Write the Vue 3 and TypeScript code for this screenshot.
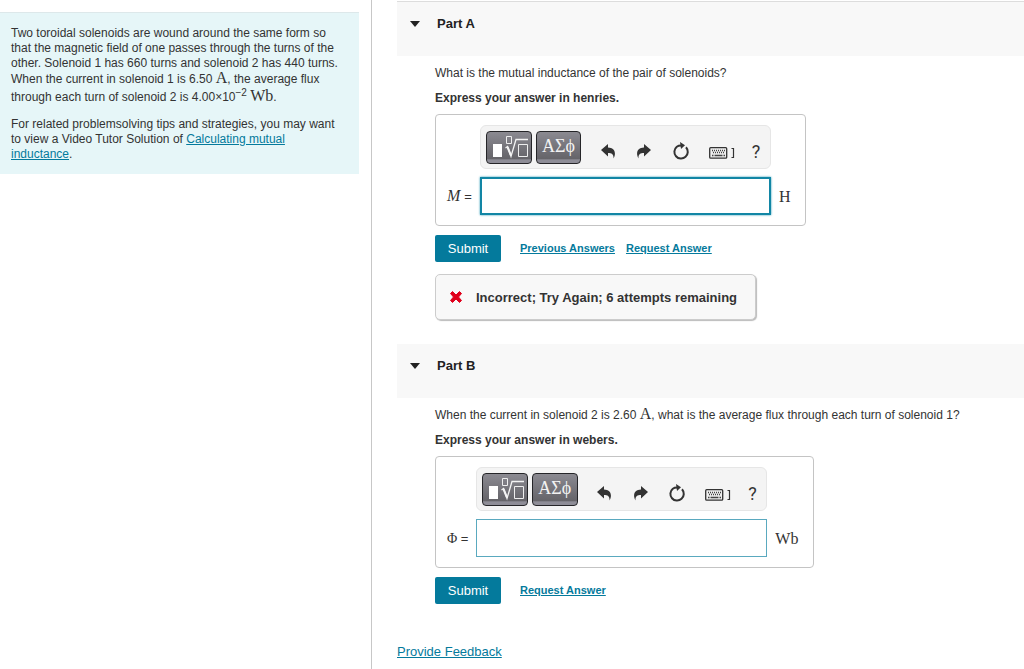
<script setup lang="ts">
import { ref } from 'vue'

interface Part {
  id: string
  title: string
  question: string
  amount?: string
  questionEnd?: string
  instruction: string
  symbol: string
  italic: boolean
  unit: string
  active: boolean
  links: string[]
  feedback?: string
}

const parts: Part[] = [
  {
    id: 'a',
    title: 'Part A',
    question: 'What is the mutual inductance of the pair of solenoids?',
    instruction: 'Express your answer in henries.',
    symbol: 'M',
    italic: true,
    unit: 'H',
    active: true,
    links: ['Previous Answers', 'Request Answer'],
    feedback: 'Incorrect; Try Again; 6 attempts remaining',
  },
  {
    id: 'b',
    title: 'Part B',
    question: 'When the current in solenoid 2 is 2.60',
    amount: 'A',
    questionEnd: ', what is the average flux through each turn of solenoid 1?',
    instruction: 'Express your answer in webers.',
    symbol: 'Φ',
    italic: false,
    unit: 'Wb',
    active: false,
    links: ['Request Answer'],
  },
]

const answers = ref<Record<string, string>>({ a: '', b: '' })
const open = ref<Record<string, boolean>>({ a: true, b: true })
</script>

<template>
  <div class="page">
    <aside class="side">
      <div class="problem">
        <p>
          Two toroidal solenoids are wound around the same form so that the magnetic field of one
          passes through the turns of the other. Solenoid 1 has 660 turns and solenoid 2 has 440
          turns. When the current in solenoid 1 is 6.50 <span class="math">A</span>, the average flux
          through each turn of solenoid 2 is 4.00×10<sup>−2</sup> <span class="math">Wb</span>.
        </p>
        <p>
          For related problemsolving tips and strategies, you may want to view a Video Tutor
          Solution of <a href="#">Calculating mutual inductance</a>.
        </p>
      </div>
    </aside>

    <main class="main">
      <section v-for="part in parts" :key="part.id" class="part">
        <h2 class="head">
          <button type="button" class="toggle" :aria-expanded="open[part.id]" @click="open[part.id] = !open[part.id]">
            <svg width="10" height="6" viewBox="0 0 10 6" aria-hidden="true"><path d="M0 0h10L5 6z" fill="#222" /></svg>
            <span>{{ part.title }}</span>
          </button>
        </h2>
        <div v-if="open[part.id]" class="body">
          <p class="question">{{ part.question }}<template v-if="part.amount">&nbsp;<span class="math">{{ part.amount }}</span>{{ part.questionEnd }}</template></p>
          <p class="instruction">{{ part.instruction }}</p>

          <div class="answer">
            <div class="toolbar" role="toolbar">
              <button type="button" class="dark" aria-label="Templates">
                <svg width="38" height="26" viewBox="0 0 38 26" aria-hidden="true">
                  <path d="M3 10h9v13H3z" fill="#fff" />
                  <path d="M16.500 2.500h5v7h-5zM28.500 10.500h9v12h-9z" fill="none" stroke="#eee" />
                  <path d="M15.500 14l2-1.500L21 22.500 26 5.500h12" fill="none" stroke="#f4f4f4" stroke-width="1.300" />
                  <path d="M17.500 13l3.500 8.500" stroke="#f4f4f4" stroke-width="2" />
                </svg>
              </button>
              <button type="button" class="dark greek">ΑΣϕ</button>
              <button type="button" class="tool first" aria-label="Undo">
                <svg width="14" height="16" viewBox="0 0 14 16" aria-hidden="true"><path d="M0 7L7 1v3.500c5 .2 7.500 3 6.800 7.500-.2 1.300-.6 2.500-1.300 3.500C12.800 11.500 11 10 7 10v3.500z" fill="#333" /></svg>
              </button>
              <button type="button" class="tool" aria-label="Redo">
                <svg width="14" height="16" viewBox="0 0 14 16" aria-hidden="true"><path d="M14 7L7 1v3.500C2 4.700-.5 7.500.2 12c.2 1.300.6 2.500 1.300 3.500C1.200 11.500 3 10 7 10v3.500z" fill="#333" /></svg>
              </button>
              <button type="button" class="tool" aria-label="Reset">
                <svg width="16" height="18" viewBox="0 0 16 18" aria-hidden="true">
                  <path d="M13 5.300A6.700 6.700 0 1 1 3.800 4.700Q5.500 3.500 8 3.500" fill="none" stroke="#333" stroke-width="2" />
                  <path d="M7 0l5 3.300L8 7z" fill="#333" />
                </svg>
              </button>
              <button type="button" class="tool keys" aria-label="Keyboard shortcuts">
                <svg width="26" height="12" viewBox="0 0 26 12" aria-hidden="true">
                  <rect x=".7" y=".7" width="17" height="10.500" rx="1" fill="#eee" stroke="#333" stroke-width="1.300" />
                  <path d="M3 3.500h13M4 5.500h11" stroke="#444" stroke-width="1.400" stroke-dasharray="1 1" />
                  <path d="M3 8.500h1.500M5.500 8.500h8M14.500 8.500H16" stroke="#444" stroke-width="1.500" />
                  <path d="M22.500 1.500h2v9h-2" fill="none" stroke="#333" stroke-width="1.200" />
                </svg>
              </button>
              <button type="button" class="tool help" aria-label="Help">?</button>
            </div>
            <label class="symbol" :class="{ upright: !part.italic }" :for="'answer-' + part.id">{{ part.symbol }} <span class="equals">=</span></label>
            <input :id="'answer-' + part.id" v-model="answers[part.id]" type="text" class="field" :class="{ active: part.active }" autocomplete="off">
            <span class="unit">{{ part.unit }}</span>
          </div>

          <div class="actions">
            <button type="button" class="submit">Submit</button>
            <a v-for="link in part.links" :key="link" href="#">{{ link }}</a>
          </div>

          <div v-if="part.feedback" class="feedback" role="status">
            <svg width="14" height="14" viewBox="0 0 14 14" aria-hidden="true"><path d="M3.500 1.500L7 5l3.500-3.500 2 2L9.500 7l3 3.500-2 2L7 9l-3.500 3.500-2-2 3-3.500-3-3.500z" fill="#e0001b" stroke="#e0001b" stroke-linejoin="round" /></svg>
            <span>{{ part.feedback }}</span>
          </div>
        </div>
      </section>
      <a href="#" class="provide">Provide Feedback</a>
    </main>
  </div>
</template>

<style>
body {
  margin: 0;
  background: #fff;
}
</style>

<style scoped>
* {
  box-sizing: border-box;
}
.page {
  display: grid;
  grid-template-columns: 372px minmax(0, 1fr);
  min-height: 100vh;
  font-family: "Liberation Sans", Arial, sans-serif;
  font-size: 12px;
  line-height: 15px;
  color: #333;
}
p,
h2 {
  margin: 0;
}
a {
  color: #047a9c;
}
button {
  font-family: inherit;
  cursor: pointer;
}
.side {
  padding: 12px 12px 0 0;
  border-right: 1px solid #c7c7c7;
}
.problem {
  display: flex;
  flex-direction: column;
  gap: 12px;
  padding: 13px 14px 12px 11px;
  background: #e6f6f8;
  border-top: 1px solid #dde8ea;
}
.math,
.symbol,
.unit {
  font-family: "Liberation Serif", "Times New Roman", serif;
  font-size: 16px;
}
.math {
  line-height: 14px;
}
sup {
  font-size: 10px;
  line-height: 12px;
}
.main {
  padding: 1px 0 8px 25px;
}
.part {
  padding-bottom: 24px;
}
.head {
  height: 54px;
  padding: 14px 13px;
  background: #f8f8f8;
}
.part:first-child .head {
  height: 55px;
  border-top: 1px solid #ddd;
}
.toggle {
  display: flex;
  align-items: center;
  gap: 17px;
  padding: 0;
  border: 0;
  background: none;
  font-size: 13px;
  font-weight: bold;
  line-height: 16px;
  color: #222;
}
.body {
  padding: 9px 16px 0 38px;
}
.question {
  line-height: 16px;
}
.instruction {
  margin-top: 9px;
  line-height: 16px;
  font-weight: bold;
}
.answer {
  display: grid;
  grid-template-columns: auto 291px auto;
  column-gap: 8px;
  row-gap: 8px;
  align-items: center;
  width: fit-content;
  margin-top: 8px;
  padding: 10px 15px 10px 11px;
  border: 1px solid #c4c4c4;
  border-radius: 4px;
}
.toolbar {
  grid-column: 2;
  display: flex;
  align-items: center;
  height: 44px;
  padding: 0 2px 0 5px;
  background: #f4f4f4;
  border: 1px solid #e6e6e6;
  border-radius: 6px;
}
.dark {
  display: flex;
  align-items: center;
  justify-content: center;
  width: 46px;
  height: 33px;
  margin-right: 4px;
  padding: 0;
  border: 1px solid #252528;
  border-radius: 4px;
  background: linear-gradient(#8b8a91, #656469 86%, #8e8d97 90%);
  color: #f2f2f2;
}
.greek {
  padding-bottom: 2px;
  font-family: "Liberation Serif", serif;
  font-size: 18px;
}
.tool {
  display: flex;
  justify-content: center;
  align-items: center;
  width: 37px;
  height: 32px;
  padding: 8px 0 0;
  border: 0;
  background: none;
  color: #333;
}
.first {
  margin-left: 4px;
}
.keys {
  width: 45px;
  padding-top: 12px;
}
.help {
  width: 24px;
  font-family: Roboto, sans-serif;
  font-size: 18px;
}
.symbol {
  grid-column: 1;
  font-style: italic;
  white-space: nowrap;
}
.upright {
  font-size: 14px;
  font-style: normal;
}
.equals {
  font-family: "Liberation Sans", Arial, sans-serif;
  font-size: 13px;
  font-style: normal;
}
.field {
  width: 100%;
  height: 38px;
  padding: 4px 8px;
  border: 1px solid #5aa9bf;
  outline: 0;
  background: #fff;
  font-size: 16px;
}
.field.active {
  border: 2px solid #1286a5;
  box-shadow: 0 0 2px #2a9ab5;
}
.actions {
  display: flex;
  align-items: center;
  gap: 11px;
  margin-top: 9px;
  font-size: 11px;
  font-weight: bold;
}
.submit {
  width: 66px;
  height: 27px;
  margin-right: 8px;
  padding: 0 0 1px;
  border: 0;
  border-radius: 2px;
  background: #047a9c;
  color: #fff;
  font-size: 13px;
}
.feedback {
  display: flex;
  align-items: center;
  gap: 13px;
  width: fit-content;
  height: 46px;
  margin-top: 12px;
  padding: 0 18px 0 13px;
  border: 1px solid #ccc;
  border-radius: 5px;
  background: #f8f8f8;
  box-shadow: 1px 1px 1px #bbb;
  font-size: 13px;
  font-weight: bold;
}
.provide {
  display: inline-block;
  margin-top: 16px;
  font-size: 13px;
  line-height: 16px;
}
</style>
